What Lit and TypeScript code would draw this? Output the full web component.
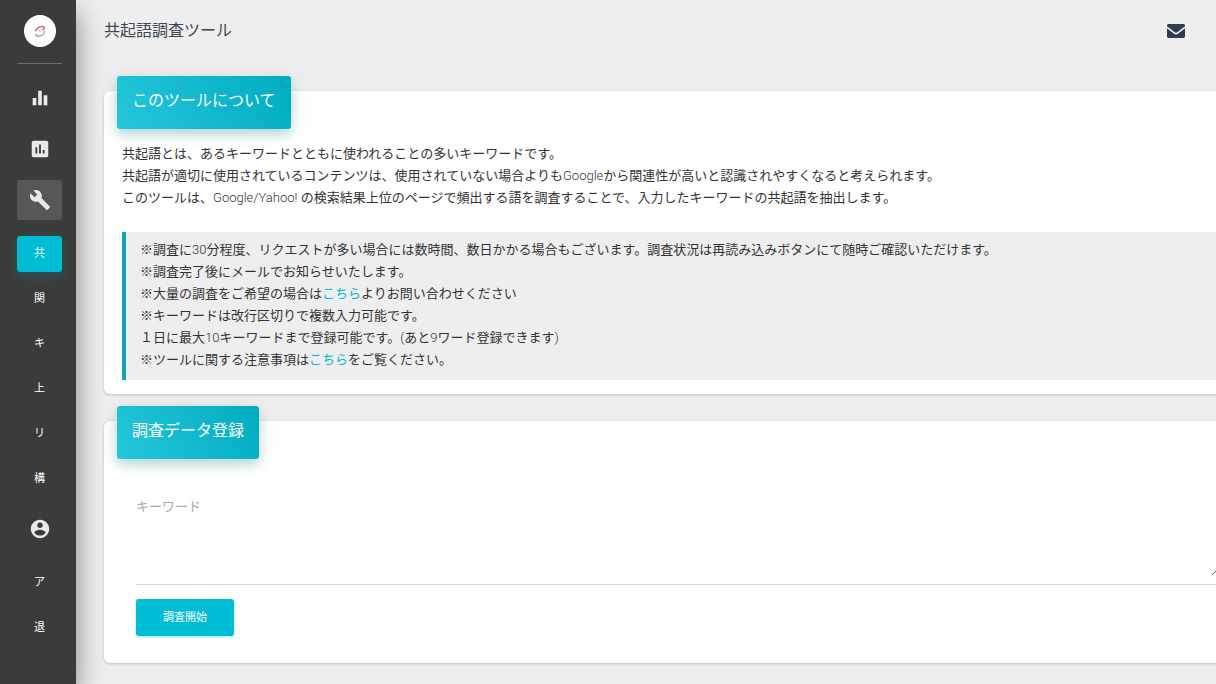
import { LitElement, html, css, svg } from "lit";
import { customElement, state } from "lit/decorators.js";
import { classMap } from "lit/directives/class-map.js";

const ICONS: Record<string, string> = {
  equalizer: "M10 20h4V4h-4v16zm-6 0h4v-8H4v8zM16 9v11h4V9h-4z",
  assessment:
    "M19 3H5c-1.1 0-2 .9-2 2v14c0 1.1.9 2 2 2h14c1.1 0 2-.9 2-2V5c0-1.1-.9-2-2-2zM9 17H7v-7h2v7zm4 0h-2V7h2v10zm4 0h-2v-4h2v4z",
  build:
    "M22.7 19l-9.1-9.1c.9-2.3.4-5-1.5-6.9-2-2-5-2.4-7.4-1.3L9 6 6 9 1.6 4.7C.4 7.1.9 10.1 2.9 12.1c1.9 1.9 4.6 2.4 6.9 1.5l9.1 9.1c.4.4 1 .4 1.4 0l2.3-2.3c.5-.4.5-1.1.1-1.4z",
  account:
    "M12 2C6.48 2 2 6.48 2 12s4.48 10 10 10 10-4.48 10-10S17.52 2 12 2zm0 3c1.66 0 3 1.34 3 3s-1.34 3-3 3-3-1.34-3-3 1.34-3 3-3zm0 14.2c-2.5 0-4.71-1.28-6-3.22.03-1.99 4-3.08 6-3.08 1.99 0 5.97 1.09 6 3.08-1.29 1.94-3.5 3.22-6 3.22z",
};

const icon = (name: string) => html`
  <svg class="icon" viewBox="0 0 24 24" aria-hidden="true">${svg`<path d=${ICONS[name]}></path>`}</svg>
`;

@customElement("side-nav")
export class SideNav extends LitElement {
  @state() private current = "共";

  static styles = css`
    :host {
      display: flex;
      flex-direction: column;
      align-items: stretch;
      flex: none;
      width: 76px;
      box-sizing: border-box;
      padding: 15px 14px 0 17px;
      background: #3b3b3b;
      box-shadow: 0 12px 28px rgba(0, 0, 0, 0.45);
      z-index: 2;
    }
    .brand {
      display: flex;
      justify-content: center;
      padding-bottom: 16px;
      border-bottom: 1px solid #6c6c6c;
    }
    .logo {
      width: 32px;
      height: 32px;
      display: block;
    }
    nav {
      display: flex;
      flex-direction: column;
      gap: 11px;
      padding-top: 14px;
    }
    .sub {
      display: flex;
      flex-direction: column;
      gap: 9px;
      padding: 5px 0 1px;
    }
    a {
      display: flex;
      align-items: center;
      justify-content: center;
      border-radius: 3px;
      color: #fff;
      text-decoration: none;
    }
    .main {
      height: 40px;
      color: #e9e9e9;
    }
    .open {
      background: #575757;
    }
    .leaf {
      height: 36px;
      font-size: 11px;
    }
    .active {
      background: #00bcd4;
      box-shadow: 0 4px 12px rgba(0, 188, 212, 0.2);
    }
    .icon {
      width: 22px;
      height: 22px;
      fill: currentColor;
    }
  `;

  private leaf(label: string) {
    return html`<a
      href="#"
      class=${classMap({ leaf: true, active: this.current === label })}
      @click=${(e: Event) => {
        e.preventDefault();
        this.current = label;
      }}
      >${label}</a
    >`;
  }

  render() {
    return html`
      <div class="brand">
        <svg class="logo" viewBox="0 0 32 32" aria-hidden="true">
          <circle cx="16" cy="16" r="16" fill="#fff"></circle>
          <g fill="none" stroke-linecap="round">
            <path d="M11.8 15.600c1.200-2.400 4.300-4.400 6.900-4.100 2 .3 1.900 2.100.2 3.300" stroke="#d9608f" stroke-width="1.600"></path>
            <path d="M14.800 15.300c.5 0 1.200.2 1.500.6" stroke="#e3a5bd" stroke-width="1.200"></path>
            <path d="M20.600 16.200c-.2 2.400-2.600 4.600-5.300 4.900-1.900.2-3.400-.4-3.700-1.600" stroke="#aaa5a7" stroke-width="1.500"></path>
          </g>
        </svg>
      </div>
      <nav>
        <a class="main" href="#" aria-label="equalizer">${icon("equalizer")}</a>
        <a class="main" href="#" aria-label="assessment">${icon("assessment")}</a>
        <a class="main open" href="#" aria-label="build">${icon("build")}</a>
        <div class="sub">${["共", "関", "キ", "上", "リ", "構"].map((l) => this.leaf(l))}</div>
        <a class="main" href="#" aria-label="account">${icon("account")}</a>
        <div class="sub">${["ア", "退"].map((l) => this.leaf(l))}</div>
      </nav>
    `;
  }
}

@customElement("title-card")
export class TitleCard extends LitElement {
  static properties = { heading: {} };
  declare heading: string;

  static styles = css`
    :host {
      display: block;
      background: #fff;
      border-radius: 6px;
      box-shadow: 0 1px 3px rgba(0, 0, 0, 0.2);
      padding: 0 18px 14px;
    }
    .head {
      display: block;
      width: fit-content;
      box-sizing: border-box;
      height: 53px;
      margin: -15px 0 0 -5px;
      padding: 13px 15px;
      border-radius: 3px;
      background: linear-gradient(60deg, #26c6da, #00acc1);
      box-shadow: 0 4px 18px rgba(0, 0, 0, 0.12), 0 6px 10px rgba(0, 172, 193, 0.2);
    }
    h2 {
      margin: 0;
      font-size: 16px;
      line-height: 24px;
      font-weight: 400;
      color: #fff;
    }
  `;

  render() {
    return html`
      <div class="head"><h2>${this.heading}</h2></div>
      <slot></slot>
    `;
  }
}

@customElement("app-root")
export class AppRoot extends LitElement {
  static styles = css`
    :host {
      display: flex;
      min-height: 100vh;
      overflow: hidden;
      background: #eee;
      color: #333;
      font-family: Roboto, "Noto Sans CJK JP", sans-serif;
      font-size: 13px;
      line-height: 22px;
      font-weight: 400;
    }
    .page {
      flex: 1;
      min-width: 0;
      padding: 0 0 20px 28px;
    }
    header {
      display: flex;
      align-items: center;
      justify-content: space-between;
      height: 62px;
      padding-right: 30px;
      color: #3c4858;
    }
    h1 {
      margin: 0;
      font-size: 16px;
      line-height: 24px;
      font-weight: 400;
    }
    .mail {
      display: flex;
      color: #2f3e4e;
    }
    .mail svg {
      width: 20px;
      height: 20px;
      fill: currentColor;
    }
    .cards {
      display: flex;
      flex-direction: column;
      gap: 27px;
      padding-top: 29px;
      margin-right: -36px;
    }
    p {
      margin: 0;
    }
    .en {
      font-weight: 300;
    }
    .about {
      padding-top: 14px;
    }
    .notice {
      margin-top: 23px;
      padding: 7px 14px 9px;
      border-left: 4px solid #0fa3b8;
      background: #eee;
    }
    .notice a {
      color: #00bcd4;
      text-decoration: none;
    }
    form {
      display: flex;
      flex-direction: column;
      align-items: flex-start;
      padding: 33px 14px 13px;
    }
    .field {
      align-self: stretch;
      margin-bottom: 14px;
      padding-bottom: 8px;
      border-bottom: 1px solid #d9d9d9;
    }
    textarea {
      display: block;
      width: 100%;
      height: 84px;
      box-sizing: border-box;
      margin: 0;
      padding: 4px 0;
      border: 0;
      background: none;
      font: inherit;
      color: inherit;
      resize: vertical;
      outline: none;
    }
    textarea::placeholder {
      color: #aaa;
      opacity: 1;
    }
    button {
      height: 37px;
      padding: 0 27px;
      border: 0;
      border-radius: 3px;
      background: #00bcd4;
      box-shadow: 0 1px 3px rgba(0, 188, 212, 0.4);
      color: #fff;
      font: inherit;
      font-size: 11px;
    }
  `;

  render() {
    return html`
      <side-nav></side-nav>
      <div class="page">
        <header>
          <h1>共起語調査ツール</h1>
          <a class="mail" href="#" aria-label="メール">
            <svg viewBox="0 0 20 20" aria-hidden="true">
              <path d="M1 4.500C1 3.700 1.700 3 2.500 3h15c.8 0 1.500.7 1.500 1.500v.8l-7.700 6c-.8.6-1.800.6-2.600 0L1 5.300z"></path>
              <path d="M1 7.300l7 5.400c1.200.9 2.800.9 4 0l7-5.400v8.200c0 .8-.7 1.500-1.500 1.500h-15c-.8 0-1.500-.7-1.500-1.500z"></path>
            </svg>
          </a>
        </header>
        <main class="cards">
          <title-card .heading=${"このツールについて"}>
            <div class="about">
              <p>共起語とは、あるキーワードとともに使われることの多いキーワードです。</p>
              <p>共起語が適切に使用されているコンテンツは、使用されていない場合よりも<span class="en">Google</span>から関連性が高いと認識されやすくなると考えられます。</p>
              <p>このツールは、<span class="en">Google/Yahoo!</span> の検索結果上位のページで頻出する語を調査することで、入力したキーワードの共起語を抽出します。</p>
            </div>
            <div class="notice">
              <p>※調査に<span class="en">30</span>分程度、リクエストが多い場合には数時間、数日かかる場合もございます。調査状況は再読み込みボタンにて随時ご確認いただけます。</p>
              <p>※調査完了後にメールでお知らせいたします。</p>
              <p>※大量の調査をご希望の場合は<a href="#">こちら</a>よりお問い合わせください</p>
              <p>※キーワードは改行区切りで複数入力可能です。</p>
              <p>１日に最大<span class="en">10</span>キーワードまで登録可能です。<span class="en">(</span>あと<span class="en">9</span>ワード登録できます<span class="en">)</span></p>
              <p>※ツールに関する注意事項は<a href="#">こちら</a>をご覧ください。</p>
            </div>
          </title-card>
          <title-card .heading=${"調査データ登録"}>
            <form @submit=${(e: Event) => e.preventDefault()}>
              <div class="field">
                <textarea aria-label="キーワード" placeholder="キーワード"></textarea>
              </div>
              <button type="submit">調査開始</button>
            </form>
          </title-card>
        </main>
      </div>
    `;
  }
}
